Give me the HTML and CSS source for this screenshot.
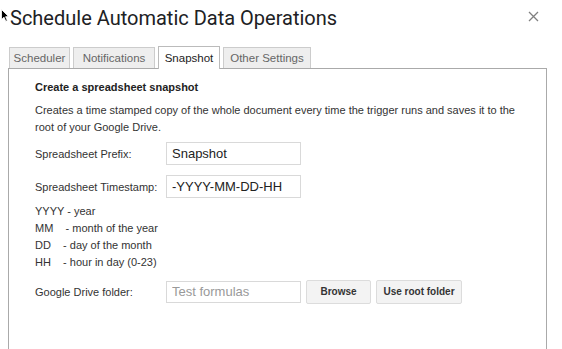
FILE: index.html
```html
<!DOCTYPE html>
<html lang="en">
<head>
    <meta charset="UTF-8">
    <title>Schedule Automatic Data Operations</title>
    <link rel="stylesheet" href="styles.css">
</head>
<body>
    <svg class="cursor" width="8" height="13" viewBox="0 0 8 13">
        <path d="M0.5 0.5 L0.5 10.5 L3 8.2 L4.8 12.3 L6.3 11.6 L4.6 7.7 L7.5 7.5 Z" fill="#000" stroke="#fff" stroke-width="0.8"/>
    </svg>
    <div class="dialog-head">
        <h1 class="dialog-title">Schedule Automatic Data Operations</h1>
        <svg class="close" width="11" height="11" viewBox="0 0 11 11">
            <path d="M1 1 L10 10 M10 1 L1 10" stroke="#808080" stroke-width="1.3"/>
        </svg>
    </div>
    <div class="tabs">
        <span class="tab tab-scheduler">Scheduler</span>
        <span class="tab tab-notifications">Notifications</span>
        <span class="tab tab-snapshot active">Snapshot</span>
        <span class="tab tab-other">Other Settings</span>
    </div>
    <div class="panel">
        <div class="heading">Create a spreadsheet snapshot</div>
        <p class="desc">Creates a time stamped copy of the whole document every time the trigger runs and saves it to the root of your Google Drive.</p>
        <div class="row">
            <label class="label">Spreadsheet Prefix:</label>
            <input type="text" class="text" value="Snapshot">
        </div>
        <div class="row">
            <label class="label">Spreadsheet Timestamp:</label>
            <input type="text" class="text" value="-YYYY-MM-DD-HH">
        </div>
        <div class="legend">
            <div>YYYY - year</div>
            <div>MM&nbsp;&nbsp;&nbsp; - month of the year</div>
            <div>DD&nbsp;&nbsp;&nbsp; - day of the month</div>
            <div>HH&nbsp;&nbsp;&nbsp; - hour in day (0-23)</div>
        </div>
        <div class="row">
            <label class="label">Google Drive folder:</label>
            <input type="text" class="text folder" placeholder="Test formulas">
            <button class="btn btn-browse">Browse</button>
            <button class="btn btn-root">Use root folder</button>
        </div>
    </div>
</body>
</html>
```

FILE: styles.css
```css
body {
    margin: 0;
    font-family: Arial, "Liberation Sans", sans-serif;
    font-size: 11px;
    color: #333;
    background: #fff;
}
.cursor {
    position: absolute;
    top: 9px;
    left: 1px;
}
.dialog-head {
    display: flex;
    justify-content: space-between;
    align-items: center;
    height: 36px;
    padding: 0 23px 0 10px;
}
.dialog-title {
    margin: 0;
    font-family: Roboto, "Liberation Sans", sans-serif;
    font-size: 20px;
    font-weight: 400;
    color: #202124;
}
.close {
    margin-top: -4px;
}
.tabs {
    display: flex;
    align-items: flex-end;
    gap: 3px;
    margin: 10px 0 0 9px;
    height: 22px;
}
.tab {
    box-sizing: border-box;
    height: 21px;
    line-height: 21px;
    text-align: center;
    font-size: 11.5px;
    color: #666;
    background: #eee;
    border: 1px solid #ccc;
    border-bottom: 0;
}
.tab-scheduler { width: 61px; }
.tab-notifications { width: 82px; }
.tab-snapshot { width: 62px; }
.tab-other { width: 88px; }
.tab.active {
    height: 23px;
    line-height: 23px;
    color: #222;
    background: #fff;
    border-color: #bbb;
    margin-bottom: -1px;
    position: relative;
}
.panel {
    margin: 0 15px 0 8px;
    height: 300px;
    border: 1px solid #aaa;
    padding: 12px 26px;
}
.heading {
    font-weight: bold;
    color: #222;
    margin-bottom: 9px;
}
.desc {
    margin: 0 0 6px;
    line-height: 17px;
}
.row {
    display: flex;
    align-items: center;
    height: 23px;
    margin-bottom: 10px;
}
.label {
    width: 131px;
}
.text {
    box-sizing: border-box;
    width: 135px;
    height: 23px;
    font-family: Arial, "Liberation Sans", sans-serif;
    font-size: 13px;
    color: #222;
    border: 1px solid #d9d9d9;
    padding: 0 5px;
    outline: none;
}
.folder {
    height: 22px;
}
.folder::placeholder {
    color: #999;
}
.legend {
    line-height: 17px;
    margin: -5px 0 9px;
}
.btn {
    box-sizing: border-box;
    height: 24px;
    margin-left: 5px;
    padding: 0;
    font-family: Arial, "Liberation Sans", sans-serif;
    font-size: 10px;
    font-weight: bold;
    color: #333;
    background: #f3f3f3;
    border: 1px solid #dcdcdc;
    border-radius: 2px;
}
.btn-browse { width: 65px; }
.btn-root { width: 86px; }
```
